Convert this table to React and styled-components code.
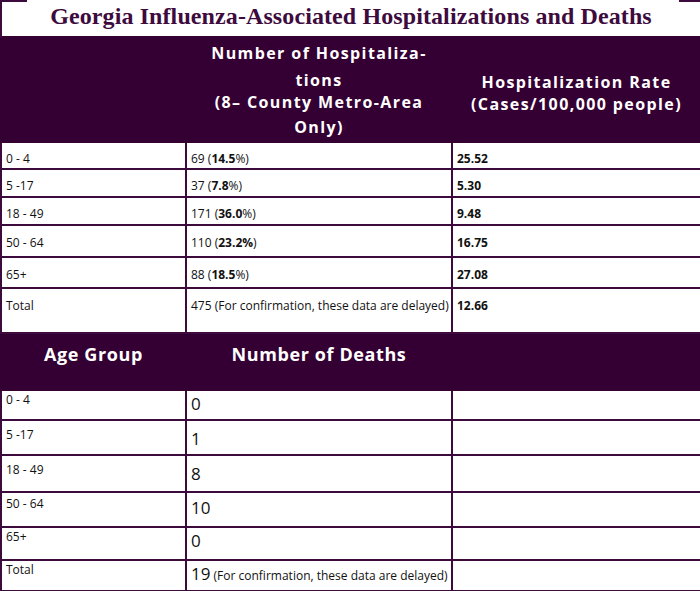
import React from 'react'
import styled, { createGlobalStyle } from 'styled-components'

const GlobalStyle = createGlobalStyle`
    html, body {
        margin: 0;
        padding: 0;
        background: #fff;
    }
`

const hospRows = [
    { age: '0 - 4', count: '69', pct: '14.5', rate: '25.52', h: 27, pad: 8 },
    { age: '5 -17', count: '37', pct: '7.8', rate: '5.30', h: 28, pad: 8 },
    { age: '18 - 49', count: '171', pct: '36.0', rate: '9.48', h: 28, pad: 8 },
    { age: '50 - 64', count: '110', pct: '23.2%', rate: '16.75', h: 32, pad: 9 },
    { age: '65+', count: '88', pct: '18.5', rate: '27.08', h: 31, pad: 9 },
]

const deathRows = [
    { age: '0 - 4', count: '0', h: 30, pad: 1 },
    { age: '5 -17', count: '1', h: 35, pad: 6 },
    { age: '18 - 49', count: '8', h: 37, pad: 6 },
    { age: '50 - 64', count: '10', h: 35, pad: 3 },
    { age: '65+', count: '0', h: 33, pad: 1 },
]

const App = () => (<>
    <GlobalStyle />
    <Table>
        <colgroup>
            <col width="185" />
            <col width="266" />
            <col width="249" />
        </colgroup>
        <tbody>
            <tr>
                <Title colSpan="3">Georgia Influenza-Associated Hospitalizations and Deaths</Title>
            </tr>
            <Row h={105}>
                <Head></Head>
                <Head pad={4}>
                    <HeadLine>Number of Hospitaliza-</HeadLine>
                    <HeadLine gap={5}>tions</HeadLine>
                    <HeadLine>(8– County Metro-Area</HeadLine>
                    <HeadLine gap={3}>Only)</HeadLine>
                </Head>
                <Head pad={33}>
                    <HeadLine>Hospitalization Rate</HeadLine>
                    <HeadLine>(Cases/100,000 people)</HeadLine>
                </Head>
            </Row>
            {hospRows.map(r => (
                <Row h={r.h} key={r.age}>
                    <Cell pad={r.pad}>{r.age}</Cell>
                    <Cell pad={r.pad}>{r.count} (<b>{r.pct}</b>{r.pct.endsWith('%') ? '' : '%'})</Cell>
                    <Cell pad={r.pad}><b>{r.rate}</b></Cell>
                </Row>
            ))}
            <Row h={45}>
                <Cell pad={9}>Total</Cell>
                <Cell pad={9}>475 (For confirmation, these data are delayed)</Cell>
                <Cell pad={9}><b>12.66</b></Cell>
            </Row>
            <Row h={57}>
                <Head pad={9} big>Age Group</Head>
                <Head pad={9} big>Number of Deaths</Head>
                <Head></Head>
            </Row>
            {deathRows.map(r => (
                <Row h={r.h} key={r.age}>
                    <Cell pad={r.pad}>{r.age}</Cell>
                    <Cell pad={r.pad + 2}><Count>{r.count}</Count></Cell>
                    <Cell></Cell>
                </Row>
            ))}
            <Row h={31}>
                <Cell pad={1}>Total</Cell>
                <Cell pad={3}><Count>19</Count> (For confirmation, these data are delayed)</Cell>
                <Cell></Cell>
            </Row>
        </tbody>
    </Table>
</>
)

export default App

const Table = styled.table`
    width: 700px;
    table-layout: fixed;
    border-collapse: collapse;
    font-family: "Open Sans", "Lato", sans-serif;
    color: #111;
`

const Title = styled.td`
    position: relative;
    height: 37px;
    padding: 0 0 4px 0;
    box-sizing: border-box;
    border-left: 2px solid #3d0a3d;
    border-right: 2px solid #3d0a3d;
    background: #fff;
    text-align: center;
    font-family: "Liberation Serif", serif;
    font-weight: bold;
    font-size: 24px;
    letter-spacing: 0.1px;
    color: #3d0b3d;
    &::before, &::after {
        content: '';
        position: absolute;
        top: 0;
        height: 2px;
        background: #3d0a3d;
    }
    &::before {
        left: -2px;
        width: 27px;
    }
    &::after {
        right: -2px;
        width: 23px;
    }
`

const Row = styled.tr`
    height: ${p => p.h}px;
`

const Head = styled.td`
    background: #340033;
    border: 2px solid #340033;
    color: #fff;
    text-align: center;
    vertical-align: top;
    padding: ${p => p.pad || 0}px 0 0 0;
    font-weight: bold;
    font-size: ${p => p.big ? 18 : 16}px;
    letter-spacing: ${p => p.big ? 0.6 : 1.4}px;
    line-height: 22px;
`

const HeadLine = styled.div`
    line-height: 22px;
    margin-top: ${p => p.gap || 0}px;
    white-space: nowrap;
`

const Cell = styled.td`
    background: #fff;
    border: 2px solid #3d0a3d;
    vertical-align: top;
    padding: ${p => p.pad || 0}px 4px 0 4px;
    font-size: 12px;
    line-height: 16px;
    white-space: nowrap;
    overflow: hidden;
    b {
        font-weight: bold;
    }
`

const Count = styled.span`
    font-size: 17px;
    line-height: 20px;
`
